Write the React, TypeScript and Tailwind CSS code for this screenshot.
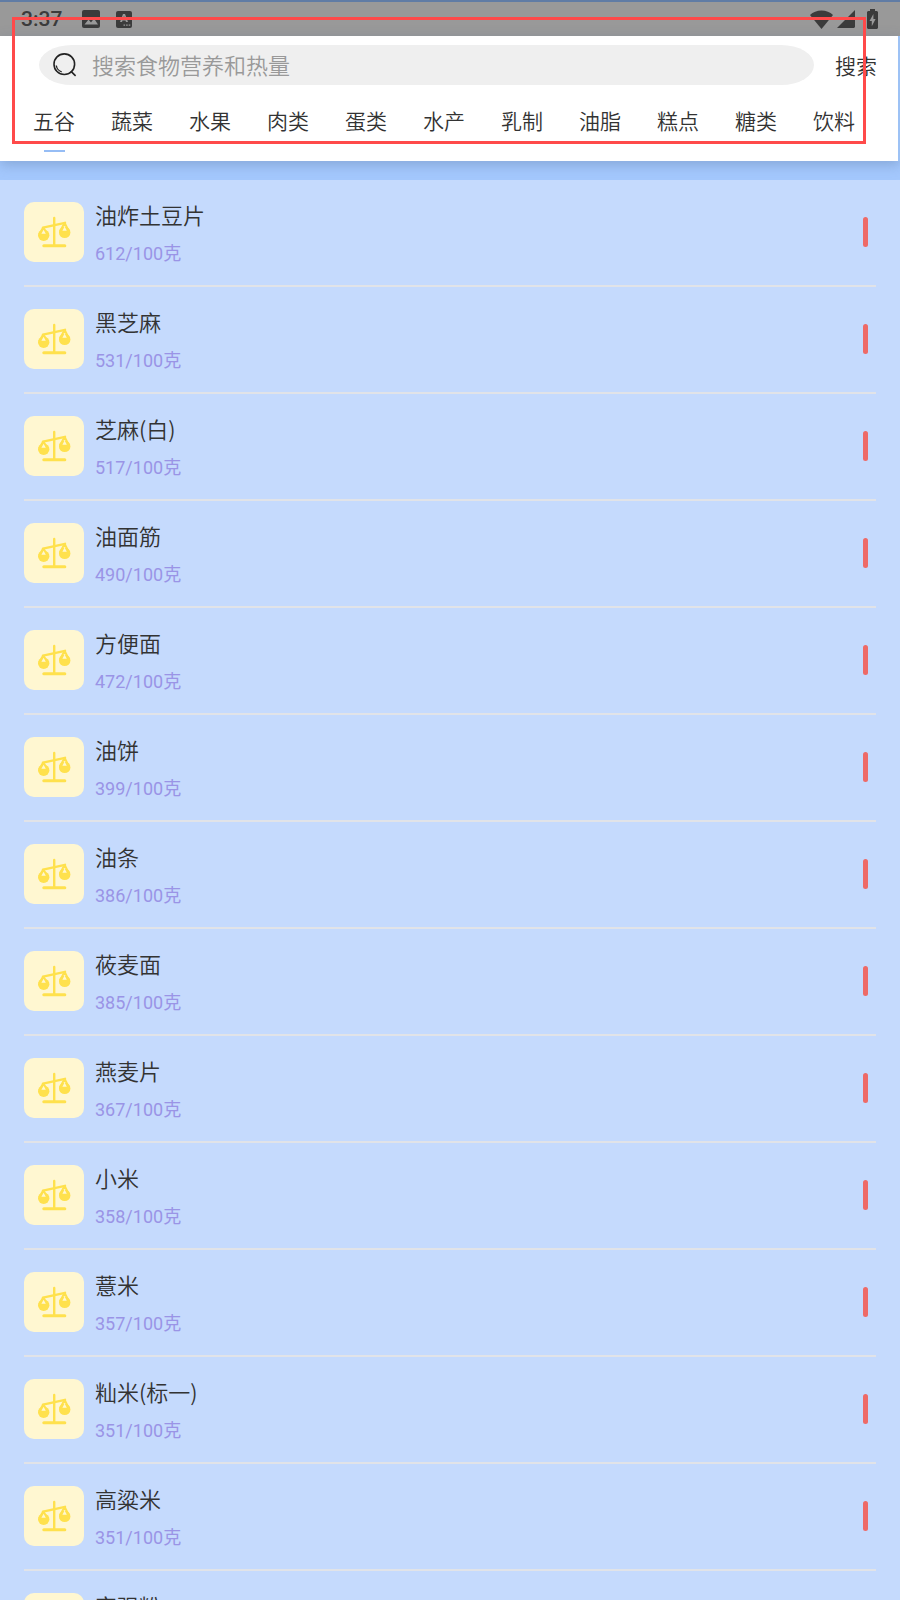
import { useState } from 'react'

interface Food {
  name: string
  calories: number
}

const CATEGORIES = ['五谷', '蔬菜', '水果', '肉类', '蛋类', '水产', '乳制', '油脂', '糕点', '糖类', '饮料']

const FOODS: Food[] = [
  { name: '油炸土豆片', calories: 612 },
  { name: '黑芝麻', calories: 531 },
  { name: '芝麻(白)', calories: 517 },
  { name: '油面筋', calories: 490 },
  { name: '方便面', calories: 472 },
  { name: '油饼', calories: 399 },
  { name: '油条', calories: 386 },
  { name: '莜麦面', calories: 385 },
  { name: '燕麦片', calories: 367 },
  { name: '小米', calories: 358 },
  { name: '薏米', calories: 357 },
  { name: '籼米(标一)', calories: 351 },
  { name: '高粱米', calories: 351 },
  { name: '富强粉', calories: 350 },
]

function ScaleIcon() {
  return (
    <svg viewBox="0 0 34 32" className="h-8 w-[34px]" fill="none" aria-hidden="true">
      <path d="M17.2 2v27" stroke="#ffe14d" strokeWidth="2.4" strokeLinecap="round" />
      <path d="M6.8 29.8h21" stroke="#ffe14d" strokeWidth="3" strokeLinecap="round" />
      <path d="M6 11.6 28 6.8" stroke="#ffe14d" strokeWidth="2.4" strokeLinecap="round" />
      <path
        d="M6 11.8 2.4 18M6.4 11.8l4.2 6.2M27.4 7.2 23.2 15M27.8 7.2l4 8"
        stroke="#ffe14d"
        strokeWidth="2"
        strokeLinecap="round"
      />
      <circle cx="6.7" cy="19.2" r="5.7" fill="#ffe14d" />
      <circle cx="27.7" cy="16.4" r="5.7" fill="#ffe14d" />
      <path d="m6.6 13.8 2.2 4H4.4ZM27.6 10.6l2.2 4.2h-4.4Z" fill="#fff7d1" />
    </svg>
  )
}

function StatusBar() {
  return (
    <div className="flex h-9 shrink-0 items-center border-t-2 border-[#607ca5] bg-[#999999] pr-[22px] pl-[21px] text-[#3b3b3b]">
      <span className="font-[Roboto] text-[21px] leading-6 font-medium">3:37</span>
      <svg viewBox="0 0 18 18" className="ml-5 size-[18px]" aria-hidden="true">
        <rect width="18" height="18" rx="2" fill="#3b3b3b" />
        <path d="m2.5 14.5 4-5 2.5 3 3-4 4 6Z" fill="#999" />
      </svg>
      <svg viewBox="0 0 16 17" className="ml-4 h-[17px] w-4" aria-hidden="true">
        <rect width="16" height="17" rx="2" fill="#3b3b3b" />
        <path d="M4 11 7 3h2l3 8h-2l-.5-1.6h-3L6 11Zm3-3h2L8 5Z" fill="#999" />
        <path d="M7.5 13.4h1.6v1.4H7.5Zm2.6 0h1.6v1.4h-1.6Zm2.6 0h1.6v1.4h-1.6Z" fill="#999" />
      </svg>
      <div className="ml-auto flex items-center">
        <svg viewBox="0 0 23 19" className="h-[19px] w-[23px]" aria-hidden="true">
          <path d="M11.5 19 0 5C3 2 7 .5 11.5.5S20 2 23 5Z" fill="#3b3b3b" />
        </svg>
        <svg viewBox="0 0 18 18" className="ml-1 size-[18px]" aria-hidden="true">
          <path d="M0 18 18 0v17l-1 1Z" fill="#3b3b3b" />
        </svg>
        <svg viewBox="0 0 11 20" className="ml-3 h-5 w-[11px]" aria-hidden="true">
          <path d="M3 0h5v2h2l1 1v16l-1 1H1l-1-1V3l1-1h2Z" fill="#3b3b3b" />
          <path d="M6.4 5 2.5 12h2.3v5.3L8.6 10H6.4Z" fill="#999" />
        </svg>
      </div>
    </div>
  )
}

function SearchBar() {
  return (
    <form className="flex items-center pt-[9px] pr-[17px] pl-[39px]" onSubmit={(e) => e.preventDefault()}>
      <label className="flex h-10 min-w-0 flex-1 items-center rounded-[33px/20px] bg-[#efefef] pl-[14px]">
        <svg viewBox="0 0 24 24" className="size-6 shrink-0" fill="none" stroke="#222" strokeWidth="1.6" aria-hidden="true">
          <circle cx="11.3" cy="11.2" r="10.3" />
          <path d="m17.8 18.2 4.8 4.6" />
          <path d="M3.3 12.5c.5 3.2 2.4 5.4 5.4 6.3" strokeWidth="1.3" />
        </svg>
        <input
          type="search"
          aria-label="搜索食物营养和热量"
          placeholder="搜索食物营养和热量"
          className="ml-[15px] h-10 min-w-0 flex-1 bg-transparent pb-[2px] text-[22px] outline-none placeholder:text-[#999999]"
        />
      </label>
      <button type="submit" className="ml-[17px] px-1 text-[21px] leading-10">
        搜索
      </button>
    </form>
  )
}

export default function App() {
  const [active, setActive] = useState('五谷')

  return (
    <div className="relative flex h-screen flex-col overflow-hidden bg-[#c5dafd] font-['Noto_Sans_CJK_SC',sans-serif] font-[350] text-[#333333]">
      <StatusBar />
      <div className="shrink-0 bg-[#a4c8fd] pb-[19px]">
        <header className="border-r-2 border-[#9dc2f5] bg-white shadow-[0_4px_12px_rgba(80,110,150,0.35)]">
          <SearchBar />
          <nav className="grid grid-cols-11 pt-[15px] pr-[25px] pb-[9px] pl-[15px]">
            {CATEGORIES.map((c) => (
              <button
                key={c}
                type="button"
                onClick={() => setActive(c)}
                className="flex flex-col items-center text-[21px] leading-10 whitespace-nowrap"
              >
                {c}
                <span className={active === c ? 'mt-[10px] h-[2px] w-[21px] bg-[#96bdf5]' : 'mt-[10px] h-[2px] w-[21px]'} />
              </button>
            ))}
          </nav>
        </header>
      </div>

      <main className="min-h-0 flex-1 overflow-y-auto px-6 [scrollbar-width:none]">
        <ul>
          {FOODS.map((food) => (
            <li key={food.name} className="flex items-center border-b-2 border-[#e1e3e8] pt-[22px] pb-[23px]">
              <div className="flex size-[60px] shrink-0 items-center justify-center rounded-[10px] bg-[#fff7d1]">
                <ScaleIcon />
              </div>
              <div className="ml-[11px] h-[60px] min-w-0 flex-1">
                <h2 className="text-[22px] leading-6">{food.name}</h2>
                <p className="mt-4 font-[Roboto,'Noto_Sans_CJK_SC',sans-serif] text-[18px] leading-6 font-normal text-[#9a94e6]">
                  {food.calories}/100克
                </p>
              </div>
              <span className="mr-2 h-[30px] w-[5px] shrink-0 rounded-full bg-[#ee6a67]" />
            </li>
          ))}
        </ul>
      </main>

      {/* highlight frame over the search and category area */}
      <div className="pointer-events-none absolute top-[17px] right-[34px] left-3 h-[127px] border-3 border-[#ff4a4a]" />
    </div>
  )
}
